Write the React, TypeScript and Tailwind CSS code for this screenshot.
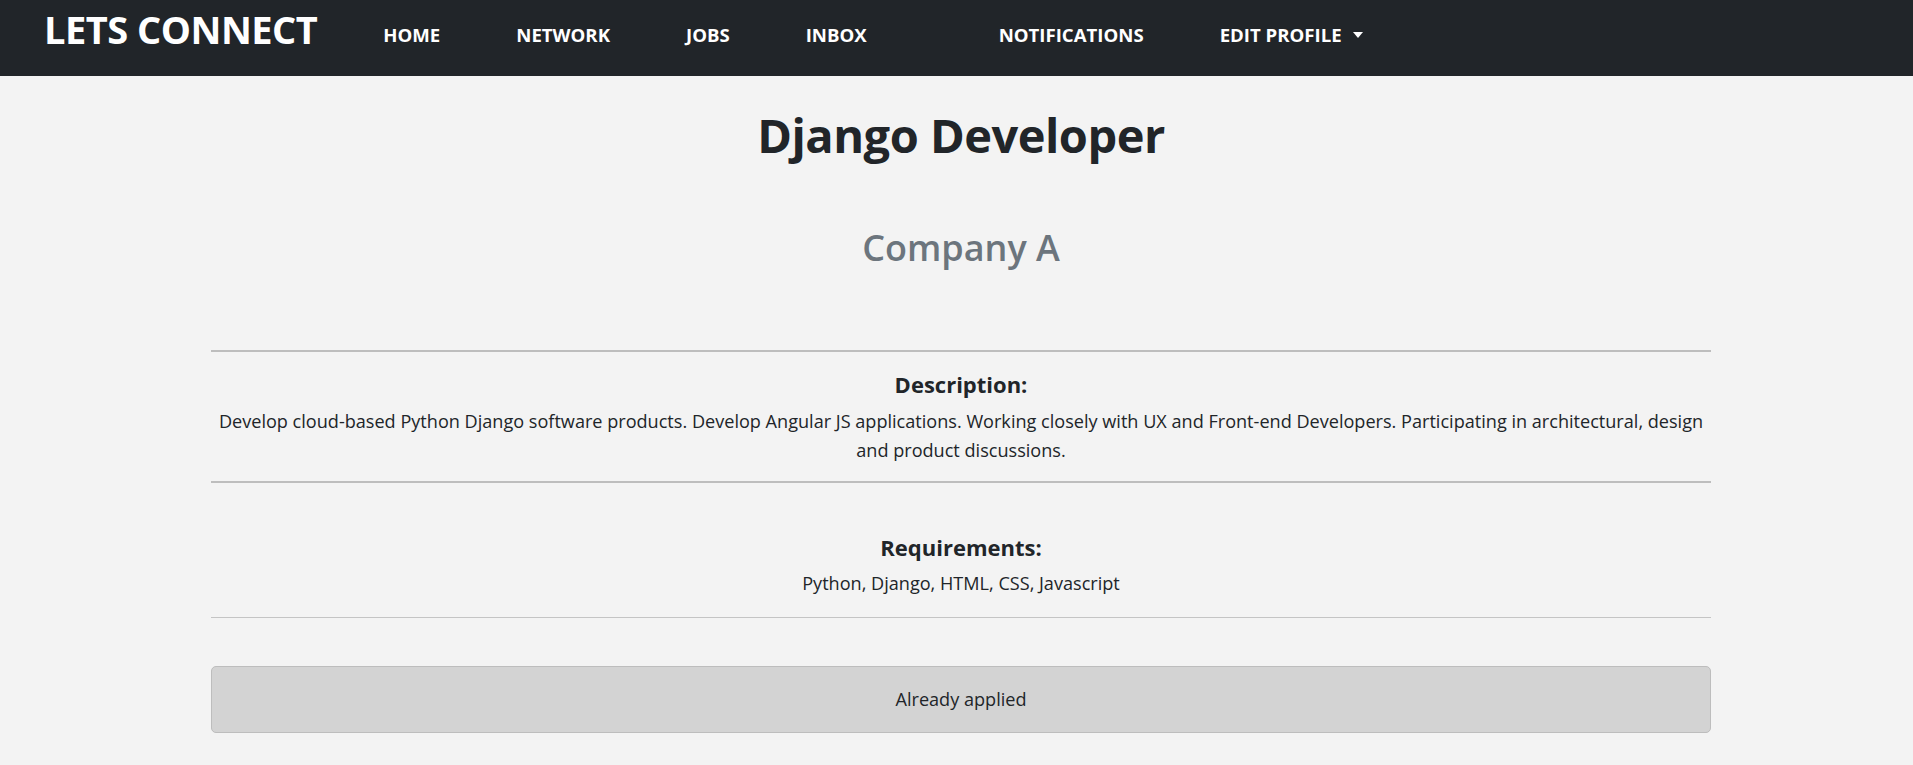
import React from 'react';

const navLinks = ['HOME', 'NETWORK', 'JOBS', 'INBOX'];

const Navbar = () => (
  <nav className="h-[76px] bg-[#212529] flex items-center pl-[44px]">
    <a className="mb-[19px] text-[38px] font-bold text-white leading-none tracking-[-0.5px]">LETS CONNECT</a>
    <ul className="flex items-center ml-[28px] mb-[6px]">
      {navLinks.map(link => (
        <li key={link} className="px-[38px] text-[18.6px] font-bold text-white">
          {link}
        </li>
      ))}
      <li className="ml-[56px] px-[38px] text-[18.6px] font-bold text-white">NOTIFICATIONS</li>
      <li className="px-[38px] text-[18.6px] font-bold text-white flex items-center">
        EDIT PROFILE
        <span className="ml-[11px] inline-block w-0 h-0 border-t-[6px] border-t-white border-x-[5px] border-x-transparent" />
      </li>
    </ul>
  </nav>
);

const Section = ({ title, children }: { title: string; children: React.ReactNode }) => (
  <div className="text-center">
    <h5 className="text-[22px] font-bold leading-[1.2] text-[#212529]">{title}</h5>
    {children}
  </div>
);

export default function App() {
  return (
    <div className="min-h-[765px] bg-[#f3f3f3] text-[#212529]" style={{ fontFamily: '"Open Sans", "Noto Sans", sans-serif' }}>
      <Navbar />
      <main className="w-[1500px] ml-[211px]">
        <h1 className="mt-[31px] text-center text-[47px] font-bold leading-[1.2] tracking-[-0.5px]">Django Developer</h1>
        <h2 className="mt-[63px] text-center text-[36px] font-semibold leading-[1.2] text-[#6c757d]">Company A</h2>

        <hr className="mt-[80px] border-0 border-t-2 border-[#bdbdbd]" />
        <div className="mt-[19px]">
          <Section title="Description:">
            <p className="mt-[10px] text-[18.1px] leading-[28.8px]">
              Develop cloud-based Python Django software products. Develop Angular JS applications. Working closely with UX and Front-end Developers. Participating in architectural, design and product discussions.
            </p>
          </Section>
        </div>
        <hr className="mt-[16px] border-0 border-t-2 border-[#bdbdbd]" />

        <div className="mt-[51px]">
          <Section title="Requirements:">
            <p className="mt-[9px] text-[18.1px] leading-[28.8px]">Python, Django, HTML, CSS, Javascript</p>
          </Section>
        </div>
        <hr className="mt-[19px] border-0 border-t border-[#c4c4c4]" />

        <button className="mt-[48px] w-full h-[67px] bg-[#d3d3d3] border border-[#bdbdbd] rounded-[5px] text-[18.1px] text-[#212529]">
          Already applied
        </button>
      </main>
    </div>
  );
}
